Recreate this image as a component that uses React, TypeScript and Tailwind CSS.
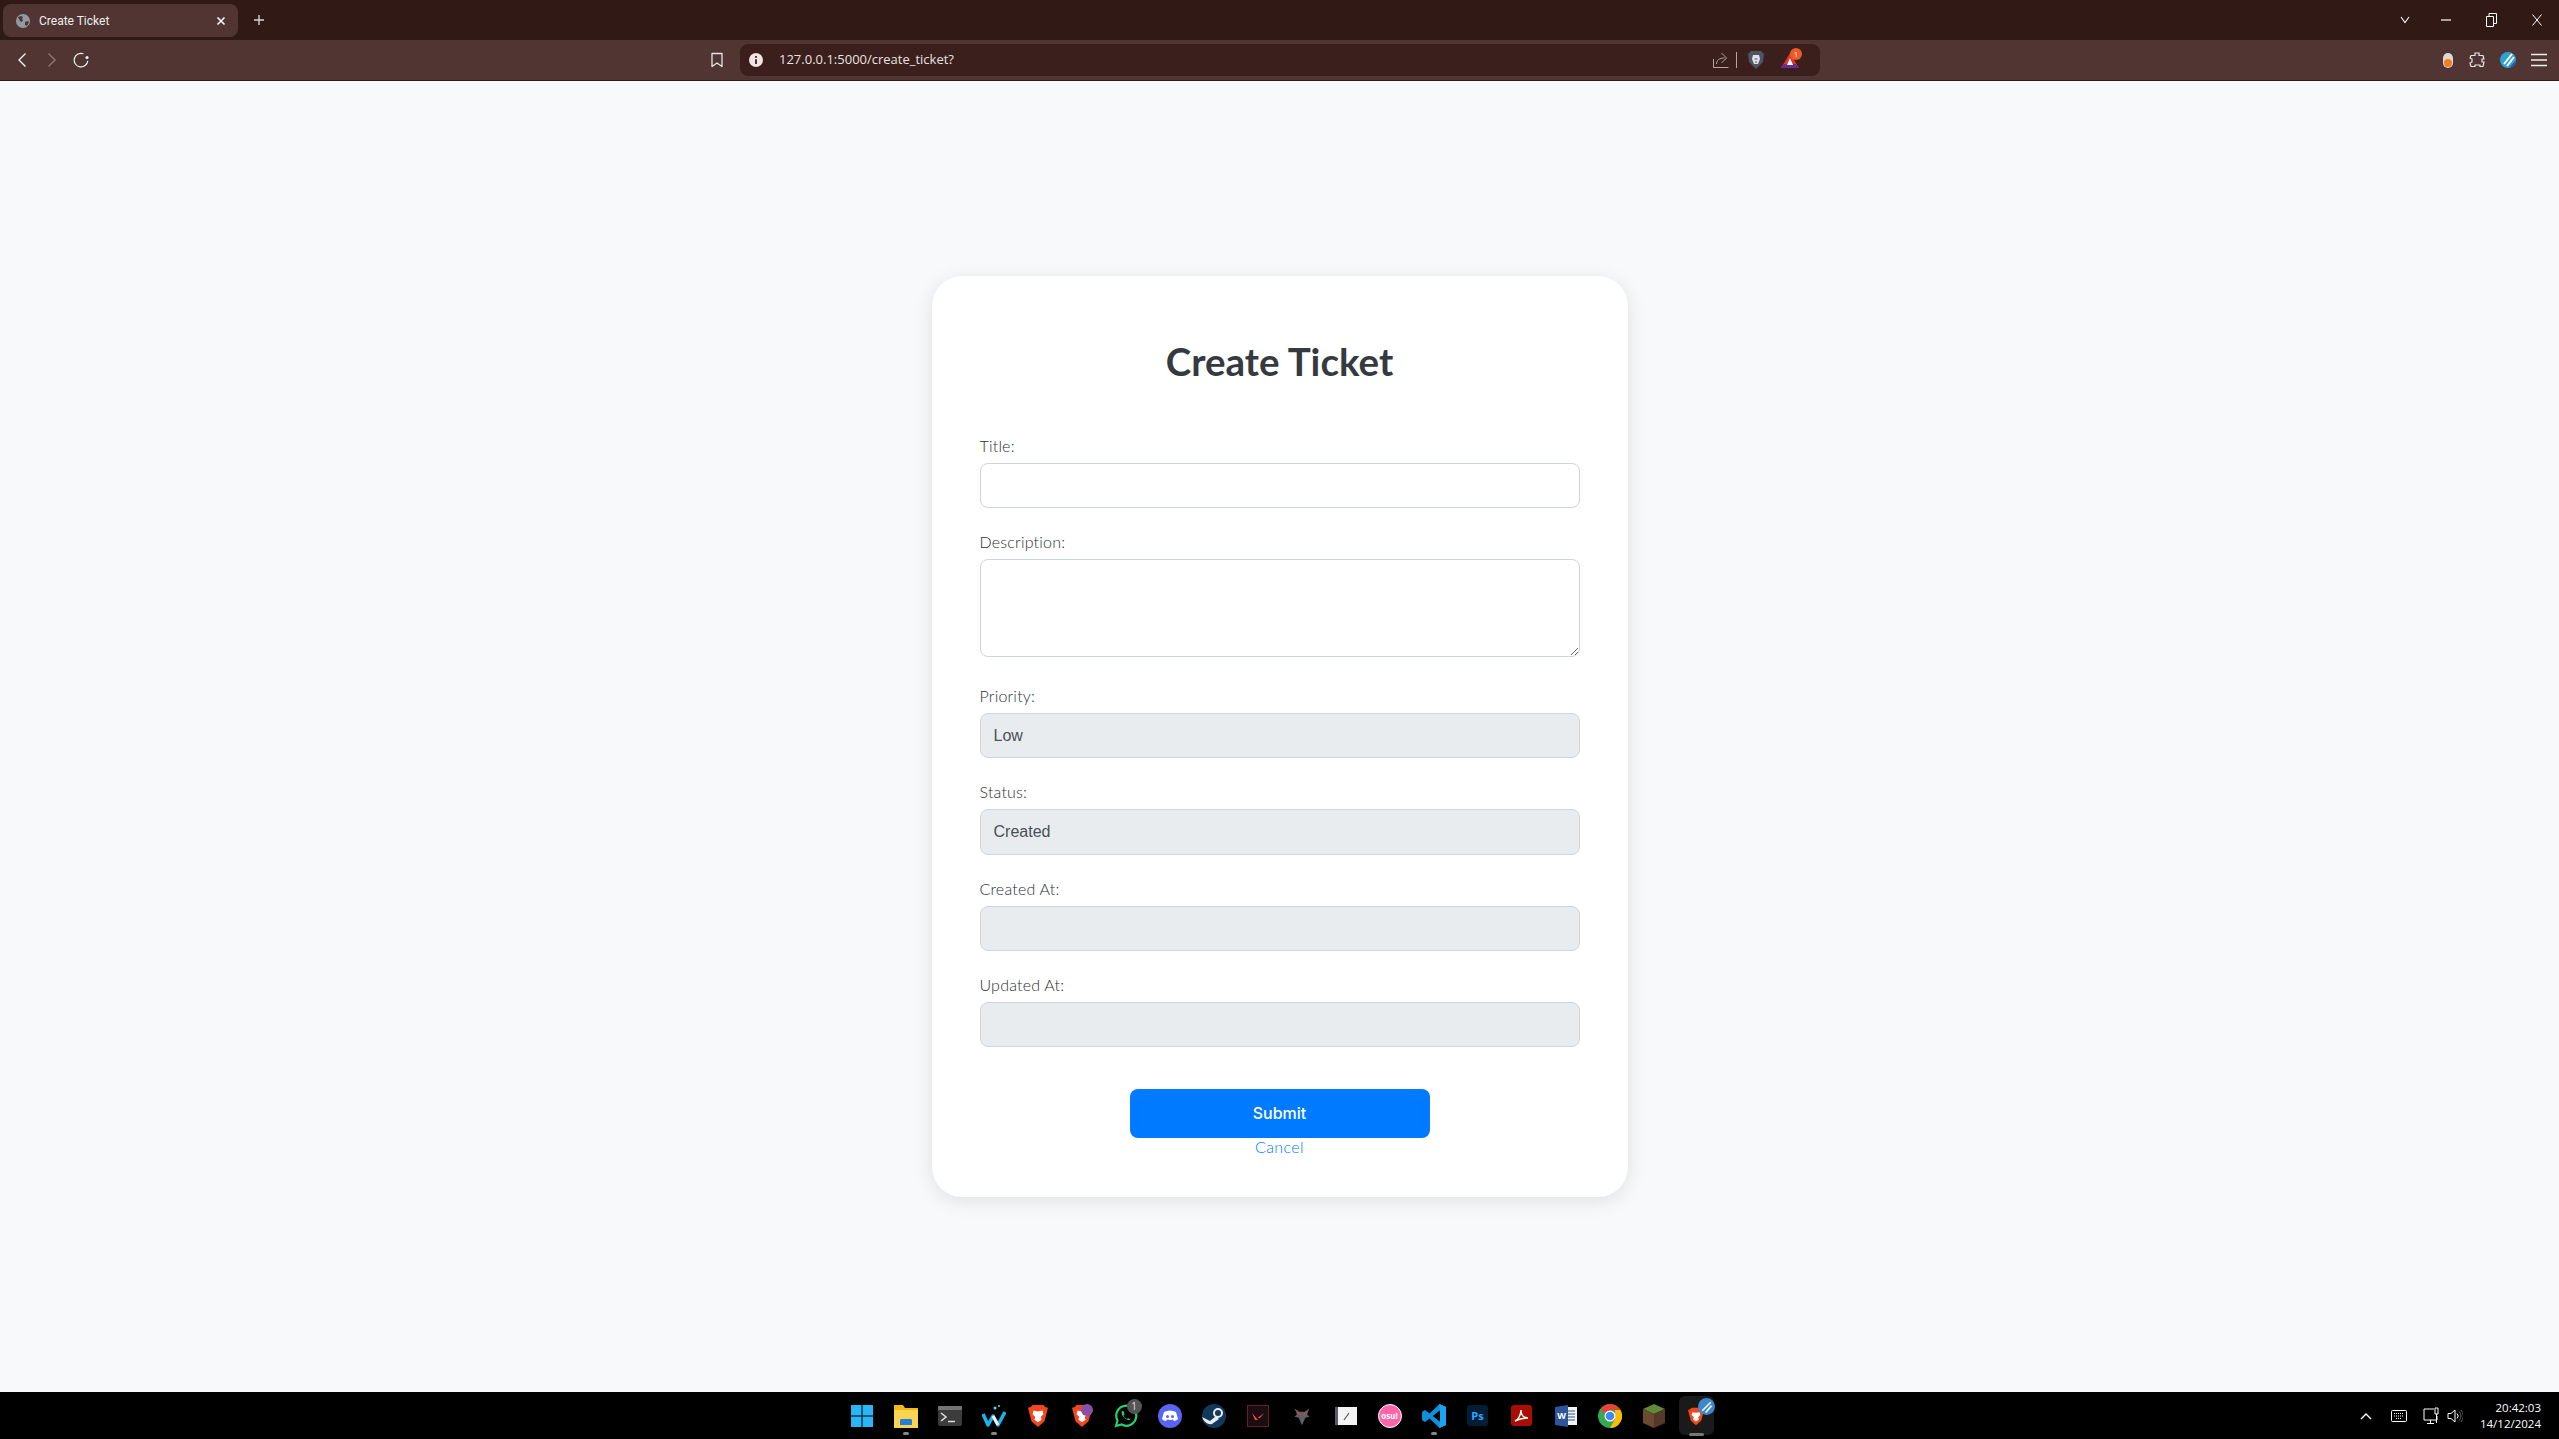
import type { ReactNode } from 'react';

const labelClass =
  "mb-2 block font-['Lato'] text-[16px] leading-[19.2px] font-light tracking-[0.2px] text-[#2b3035]";
const fieldClass =
  "block w-full rounded-lg border border-[#ced4da] pl-[13px] pr-3 font-['Liberation_Sans',sans-serif] text-[16px] text-[#495057] outline-none";

function Field({ label, className = 'mb-6', children }: { label: string; className?: string; children: ReactNode }) {
  return (
    <div className={className}>
      <label className={labelClass}>{label}</label>
      {children}
    </div>
  );
}

function TabBar() {
  return (
    <div className="flex h-10 shrink-0 items-start bg-[#311a16] pt-1 pl-[3px] font-['Roboto',sans-serif] text-white">
      <div className="flex h-[33px] w-[235px] items-center rounded-lg bg-[#503533] pl-[13px]">
        <svg width="14" height="14" viewBox="0 0 14 14">
          <circle cx="7" cy="7" r="7" fill="#8f9aa3" />
          <path d="M2 3l3-1 2 1-1 2 1 1-1 2-2-1-1-2zM9 8l3-1 1 1-2 4-2-1z" fill="#503533" />
        </svg>
        <span className="ml-[9px] text-[12px] text-[#f1eeee]">Create Ticket</span>
        <svg className="ml-auto mr-[12px]" width="10" height="10" viewBox="0 0 10 10">
          <path d="M1.5 1.5l7 7M8.5 1.5l-7 7" stroke="#fff" strokeWidth="1.6" />
        </svg>
      </div>
      <svg className="mt-[10px] ml-[15px]" width="12" height="12" viewBox="0 0 12 12">
        <path d="M6 1v10M1 6h10" stroke="#d8d2d1" strokeWidth="1.4" />
      </svg>
      <div className="ml-auto flex h-8 items-center pr-[17px]">
        <svg width="10" height="8" viewBox="0 0 10 8">
          <path d="M1 1l4 5.5L9 1" fill="none" stroke="#fff" strokeWidth="1.1" />
        </svg>
        <svg className="ml-[31px]" width="10" height="2" viewBox="0 0 10 2">
          <path d="M0 1h10" stroke="#fff" strokeWidth="1.2" />
        </svg>
        <svg className="ml-[35px]" width="11" height="14" viewBox="0 0 11 14">
          <path d="M.5 3.5h7v10h-7zM3 3.5V.5h7.5v10h-3" fill="none" stroke="#fff" />
        </svg>
        <svg className="ml-[35px]" width="10" height="12" viewBox="0 0 10 12">
          <path d="M.5.5l9 11M9.5.5l-9 11" stroke="#fff" strokeWidth="1" />
        </svg>
      </div>
    </div>
  );
}

function ToolBar() {
  return (
    <div className="flex h-[41px] shrink-0 items-center border-b border-[#2e1d1b] bg-[#503533] font-['Open_Sans',sans-serif]">
      <svg className="ml-[17px]" width="10" height="16" viewBox="0 0 10 16">
        <path d="M8.5 1.5L2 8l6.5 6.5" fill="none" stroke="#f3f0f0" strokeWidth="1.4" />
      </svg>
      <svg className="ml-[20px]" width="10" height="16" viewBox="0 0 10 16">
        <path d="M1.5 1.5L8 8l-6.5 6.5" fill="none" stroke="#8d7a78" strokeWidth="1.4" />
      </svg>
      <svg className="ml-[16px] -mt-[1px]" width="16" height="16" viewBox="0 0 16 16">
        <path d="M10.500 1.800A6.800 6.800 0 1 0 14.800 8.800" fill="none" stroke="#f3f0f0" strokeWidth="1.2" />
        <circle cx="14" cy="5.500" r="1.600" fill="#f3f0f0" />
      </svg>
      <svg className="ml-[622px]" width="12" height="16" viewBox="0 0 12 16">
        <path d="M1 1.5h10v13L6 11l-5 3.5z" fill="none" stroke="#e9e4e3" strokeWidth="1.3" strokeLinejoin="round" />
      </svg>
      <div className="ml-[17px] flex h-8 w-[1080px] items-center rounded-lg bg-[#3a1f1c]">
        <svg className="ml-[9px]" width="14" height="14" viewBox="0 0 14 14">
          <circle cx="7" cy="7" r="7" fill="#f1e4e2" />
          <path d="M7 3v1.8M7 6.2V11" stroke="#3a1f1c" strokeWidth="1.8" />
        </svg>
        <span className="ml-[16px] text-[13px] text-[#e9e2e1]">127.0.0.1:5000/create_ticket?</span>
        <svg className="ml-auto" width="16" height="16" viewBox="0 0 16 16">
          <path d="M.5 7v8.500h15M3.500 12c0-4 3-6 8-6M8.500 1l5 5-5 5" fill="none" stroke="#b5a6a3" strokeWidth="1" />
        </svg>
        <div className="ml-[7px] h-[16px] w-px bg-[#b5a6a3]" />
        <svg className="ml-[11px]" width="16" height="18" viewBox="0 0 16 18">
          <path d="M3 0h10l3 3-1 8-7 7-7-7-1-8z" fill="#4d5563" />
          <path d="M5 4h6l1 4-2 5H6L4 8z" fill="#dfe3e8" />
          <path d="M6.500 8h3M7 11h2" stroke="#4d5563" />
        </svg>
        <div className="relative ml-[17px] h-[15px] w-[18px]">
          <svg className="block" width="18" height="15" viewBox="0 0 18 15">
            <path d="M9 0l9 15H0z" fill="#e0352b" />
            <path d="M0 15l3-4h12l3 4z" fill="#662d91" />
            <path d="M9 5l3 7H6z" fill="#fff" />
          </svg>
          <span className="absolute -top-[5px] -right-[3px] flex h-3 w-3 items-center justify-center rounded-full bg-[#f05a28] text-[8px] leading-none text-white">
            1
          </span>
        </div>
        <div className="w-[21px]" />
      </div>
      <svg className="ml-[623px]" width="10" height="15" viewBox="0 0 10 15">
        <rect x="0" y="0" width="10" height="15" rx="5" fill="#dcd8d6" />
        <circle cx="5" cy="10" r="4" fill="#f47b20" />
      </svg>
      <svg className="ml-[16px]" width="16" height="16" viewBox="0 0 16 16">
        <path
          d="M6 1h4v2.500h4l1 3.500h-2v3h2l-1 4.500h-3V13H6v1.500H2l-1-3.500 2-1V7L1 6l1-2.500h4z"
          fill="none"
          stroke="#e9e4e3"
          strokeWidth="1.2"
        />
      </svg>
      <svg className="ml-[15px]" width="16" height="16" viewBox="0 0 16 16">
        <circle cx="8" cy="8" r="8" fill="#2ca3d8" />
        <path d="M4 12L12 2M7 14l7-9" stroke="#fff" strokeWidth="2" />
        <path d="M8 16c4 0 7-3 8-8l-7 8z" fill="#2d4f9e" />
      </svg>
      <svg className="ml-[15px]" width="16" height="14" viewBox="0 0 16 14">
        <path d="M0 1.500h16M0 7h16M0 12.500h16" stroke="#f3f0f0" strokeWidth="1.4" />
      </svg>
    </div>
  );
}

function BraveIcon({ width = 20, height = 22 }: { width?: number; height?: number }) {
  return (
    <svg className="block" width={width} height={height} viewBox="0 0 22 24">
      <path d="M5 0h12l2 2 3 1-2 8-2 7-7 6-7-6-2-7-2-8 3-1z" fill="#f1471d" />
      <path d="M6 6l5 1 5-1 1 4-3 3 1 3-4 3-4-3 1-3-3-3z" fill="#fff" />
    </svg>
  );
}

const taskIcons: { key: string; active?: boolean; node: ReactNode }[] = [
  {
    key: 'start',
    node: (
      <svg width="24" height="24" viewBox="0 0 24 24">
        <path d="M1 1h10.500v10.500H1zM12.500 1H23v10.500H12.500zM1 12.500h10.500V23H1zM12.500 12.500H23V23H12.500z" fill="#29b6f6" />
      </svg>
    ),
  },
  {
    key: 'files',
    active: true,
    node: (
      <svg width="24" height="24" viewBox="0 0 24 24">
        <path d="M0 1h9l2 3h13v18H0z" fill="#f5b914" />
        <path d="M0 6h24v18H0z" fill="#fcd353" />
        <path d="M7 15h10l1 1v5H6v-5z" fill="#1e80d8" />
      </svg>
    ),
  },
  {
    key: 'terminal',
    node: (
      <svg width="24" height="20" viewBox="0 0 24 20">
        <rect width="24" height="20" rx="2" fill="#3c3c3c" />
        <rect width="24" height="4" rx="1" fill="#757575" />
        <path d="M3 7l5 4-5 4" fill="none" stroke="#ddd" strokeWidth="1.600" />
        <path d="M10 15.500h7" stroke="#ddd" strokeWidth="1.500" />
      </svg>
    ),
  },
  {
    key: 'windsurf',
    active: true,
    node: (
      <svg width="24" height="24" viewBox="0 0 24 24">
        <path d="M1 10l5 11 5-9 5 9 7-13" fill="none" stroke="#18b6f0" strokeWidth="3.500" strokeLinejoin="round" />
        <path d="M11 12l5 9" stroke="#f3f3f3" strokeWidth="3" />
        <circle cx="13" cy="4" r="1.500" fill="#5dd4f7" />
        <circle cx="17" cy="2" r="1" fill="#5dd4f7" />
      </svg>
    ),
  },
  { key: 'brave', node: <BraveIcon /> },
  {
    key: 'nightly',
    node: (
      <div className="relative">
        <BraveIcon />
        <span className="absolute -top-[1px] left-[9px] h-[12px] w-[12px] rounded-full bg-[#8a4fa8]" />
      </div>
    ),
  },
  {
    key: 'whatsapp',
    node: (
      <div className="relative">
        <svg className="block" width="24" height="24" viewBox="0 0 24 24">
          <path d="M2 22l1.500-5.500A10 10 0 1 1 7.500 20.500z" fill="none" stroke="#25d366" strokeWidth="2.200" />
          <path d="M8 7c-1 2 0 5 2.500 7s5 3 6 1.500l-2.500-1.500-1 1c-2-.8-3-2-3.500-3.500l1-1L9.500 7z" fill="#25d366" />
        </svg>
        <span className="absolute -top-[5px] left-[13px] flex h-[15px] w-[15px] items-center justify-center rounded-full bg-[#555] font-['Open_Sans'] text-[10px] text-[#ddd]">
          1
        </span>
      </div>
    ),
  },
  {
    key: 'discord',
    node: (
      <svg width="24" height="24" viewBox="0 0 24 24">
        <circle cx="12" cy="12" r="12" fill="#5865f2" />
        <path d="M6 8c4-2 8-2 12 0l2 7c-1 1-3 2-4 2l-1-1.500c-2 .5-4 .5-6 0L8 17c-1 0-3-1-4-2z" fill="#fff" />
        <circle cx="9.500" cy="12.500" r="1.500" fill="#5865f2" />
        <circle cx="14.500" cy="12.500" r="1.500" fill="#5865f2" />
      </svg>
    ),
  },
  {
    key: 'steam',
    node: (
      <svg width="24" height="24" viewBox="0 0 24 24">
        <circle cx="12" cy="12" r="12" fill="#12385c" />
        <path d="M0 13l8 4 6-5 3 3-7 5c-4 1-8-2-10-7z" fill="#e6edf2" />
        <circle cx="16" cy="9" r="4" fill="none" stroke="#e6edf2" strokeWidth="2" />
      </svg>
    ),
  },
  {
    key: 'valorant',
    node: (
      <svg width="22" height="22" viewBox="0 0 22 22">
        <rect x=".5" y=".5" width="21" height="21" fill="#1b0d10" stroke="#6b1a2a" />
        <path d="M5 8l6 7H8zM17 8l-4 5h-2.500z" fill="#fd4556" />
      </svg>
    ),
  },
  {
    key: 'witcher',
    node: (
      <svg width="20" height="20" viewBox="0 0 20 24">
        <path d="M1 3l6 4h6l6-4-3 7 3 3-5 1-4 9-4-9-5-1 3-3z" fill="#5d6165" />
        <path d="M4 8l4 2M16 8l-4 2" stroke="#e23b3b" strokeWidth="1.500" />
      </svg>
    ),
  },
  {
    key: 'notes',
    node: (
      <svg width="22" height="18" viewBox="0 0 22 18">
        <rect width="22" height="18" fill="#f4f4f4" />
        <rect width="3" height="18" fill="#5a5a6a" />
        <path d="M9 13l5-7" stroke="#555" strokeWidth="1.200" />
      </svg>
    ),
  },
  {
    key: 'osu',
    node: (
      <div className="flex h-6 w-6 items-center justify-center rounded-full border border-white bg-[#ff66aa] font-['Open_Sans'] text-[8px] font-bold text-white">
        osu!
      </div>
    ),
  },
  {
    key: 'vscode',
    active: true,
    node: (
      <svg width="24" height="24" viewBox="0 0 24 24">
        <path d="M17.500 0L24 3v18l-6.500 3-10-9.500L3 18l-3-2v-8l3-2 4.500 3.500zM18 6.500L11 12l7 5.500z" fill="#0f8fdc" />
        <path d="M17.500 0L24 3v18l-6.500 3z" fill="#1aa3ee" />
        <path d="M18 6.500L11 12l7 5.500z" fill="#000" />
      </svg>
    ),
  },
  {
    key: 'photoshop',
    node: (
      <svg width="21" height="21" viewBox="0 0 21 21">
        <rect width="21" height="21" rx="3" fill="#001e36" />
        <text x="10.500" y="15" textAnchor="middle" fontFamily="Open Sans" fontSize="11" fontWeight="700" fill="#31a8ff">
          Ps
        </text>
      </svg>
    ),
  },
  {
    key: 'pdf',
    node: (
      <svg width="21" height="21" viewBox="0 0 21 21">
        <rect width="21" height="21" rx="3" fill="#a90e00" />
        <path d="M4 16c3-1 6-6 6-11 0 5 3 8 7 8-4 0-9 1-13 3z" fill="none" stroke="#fff" strokeWidth="1.500" />
      </svg>
    ),
  },
  {
    key: 'word',
    node: (
      <svg width="22" height="22" viewBox="0 0 22 22">
        <rect x="8" y="2" width="14" height="18" fill="#f4f4f4" />
        <path d="M12 6h8M12 9h8M12 12h8M12 15h8" stroke="#2b579a" />
        <path d="M0 2l13-2v22L0 20z" fill="#2b579a" />
        <text x="6.500" y="14" textAnchor="middle" fontFamily="Open Sans" fontSize="9" fontWeight="700" fill="#fff">
          W
        </text>
      </svg>
    ),
  },
  {
    key: 'chrome',
    node: (
      <svg width="24" height="24" viewBox="0 0 24 24">
        <circle cx="12" cy="12" r="12" fill="#34a853" />
        <path d="M12 0a12 12 0 0 1 10.400 6H12L5.500 9 3 4.500A12 12 0 0 1 12 0z" fill="#ea4335" />
        <path d="M22.400 6A12 12 0 0 1 12 24l5-9V6z" fill="#fbbc04" />
        <circle cx="12" cy="12" r="5.500" fill="#fff" />
        <circle cx="12" cy="12" r="4.300" fill="#4285f4" />
      </svg>
    ),
  },
  {
    key: 'minecraft',
    node: (
      <svg width="22" height="24" viewBox="0 0 22 24">
        <path d="M11 0l11 5-11 5L0 5z" fill="#5f8a3a" />
        <path d="M0 5l11 5v14L0 19z" fill="#6b4a2f" />
        <path d="M22 5L11 10v14l11-5z" fill="#54392a" />
      </svg>
    ),
  },
];

function TaskBar() {
  return (
    <div className="relative flex h-[47px] shrink-0 items-center justify-center bg-black">
      {taskIcons.map((icon) => (
        <div key={icon.key} className="relative flex h-[47px] w-[44px] items-center justify-center">
          {icon.node}
          {icon.active && <span className="absolute bottom-[4px] h-[3px] w-[6px] rounded-full bg-[#888]" />}
        </div>
      ))}
      <div className="relative flex h-[47px] w-[44px] items-center justify-center">
        <div className="absolute top-[4px] left-[3px] h-[39px] w-[35px] rounded-md bg-[#1a1a1a]" />
        <div className="relative -ml-[4px] mt-[1px]">
          <BraveIcon width={16} height={21} />
          <svg className="absolute -top-[8px] left-[10px]" width="17" height="17" viewBox="0 0 20 20">
            <circle cx="10" cy="10" r="10" fill="#3c88c8" />
            <path d="M5 15L15 5M9 17l7-8" stroke="#e8f2f8" strokeWidth="2" />
          </svg>
        </div>
        <span className="absolute bottom-[3px] left-[13px] h-[3px] w-[15px] rounded-full bg-[#777]" />
      </div>
      {/* system tray, floats over the bar on the right */}
      <div className="absolute top-0 right-[18px] flex h-[47px] items-center text-white">
        <svg width="12" height="8" viewBox="0 0 12 8">
          <path d="M1 7l5-5 5 5" fill="none" stroke="#fff" strokeWidth="1.400" />
        </svg>
        <svg className="ml-[19px]" width="16" height="12" viewBox="0 0 16 12">
          <rect x=".5" y=".5" width="15" height="11" rx="1" fill="none" stroke="#fff" />
          <path d="M3 3.500h10M3 6h10M5 8.500h6" stroke="#fff" strokeDasharray="1 1" />
        </svg>
        <svg className="ml-[16px]" width="18" height="18" viewBox="0 0 18 18">
          <path d="M11 2H1v11h13V9M7.500 13v3M4 16.500h7M12 1h3v6h-3zM13.500 7v9" fill="none" stroke="#fff" />
        </svg>
        <svg className="ml-[6px]" width="16" height="14" viewBox="0 0 16 14">
          <path d="M1 4.500h3L8 1v12L4 9.500H1z" fill="none" stroke="#fff" />
          <path d="M10 4.500a3.500 3.500 0 0 1 0 5" fill="none" stroke="#fff" />
          <path d="M12 2.500a6 6 0 0 1 0 9M14 1a8.500 8.500 0 0 1 0 12" fill="none" stroke="#666" />
        </svg>
        <div className="ml-[17px] text-right font-['Open_Sans',sans-serif] text-[11.5px] leading-[16px] text-white">
          <div>20:42:03</div>
          <div>14/12/2024</div>
        </div>
      </div>
    </div>
  );
}

export default function App() {
  return (
    <div className="flex h-[1439px] flex-col overflow-hidden bg-[#f8f9fa]">
      <TabBar />
      <ToolBar />
      <main className="flex min-h-0 flex-1 items-center justify-center">
        <form className="w-[696px] rounded-[30px] bg-white px-12 pt-16 pb-[41.200px] shadow-[0_4px_20px_rgba(0,0,0,0.1)]">
          <h1 className="mb-[52.600px] text-center font-['Lato'] text-[38.500px] leading-[43.2px] font-bold text-[#343a40]">
            Create Ticket
          </h1>
          <Field label="Title:">
            <input type="text" className={`${fieldClass} h-[45.2px] bg-white`} />
          </Field>
          <Field label="Description:" className="mb-[28.600px]">
            <textarea className={`${fieldClass} h-[98px] bg-white py-2`} />
          </Field>
          <Field label="Priority:">
            <select disabled className={`${fieldClass} h-[45.2px] appearance-none bg-[#e9ecef] opacity-100`}>
              <option>Low</option>
            </select>
          </Field>
          <Field label="Status:">
            <input type="text" readOnly value="Created" className={`${fieldClass} h-[45.2px] bg-[#e9ecef]`} />
          </Field>
          <Field label="Created At:">
            <input type="text" readOnly className={`${fieldClass} h-[45.2px] bg-[#e9ecef]`} />
          </Field>
          <Field label="Updated At:">
            <input type="text" readOnly className={`${fieldClass} h-[45.2px] bg-[#e9ecef]`} />
          </Field>
          <button
            type="button"
            className="mx-auto mt-[41.800px] block h-[49px] w-[300px] rounded-lg bg-[#007bff] pb-[2px] font-['Inter',sans-serif] text-[16px] font-medium text-white"
          >
            Submit
          </button>
          <a className="block text-center font-['Lato'] text-[16px] leading-[18px] font-light tracking-[0.4px] text-[#007bff]">
            Cancel
          </a>
        </form>
      </main>
      <TaskBar />
    </div>
  );
}
